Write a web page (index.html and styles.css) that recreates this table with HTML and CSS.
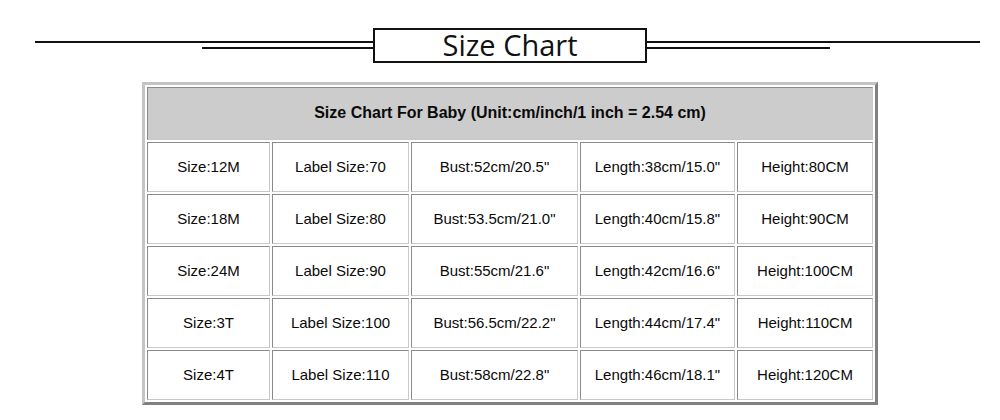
FILE: index.html
```html
<!DOCTYPE html>
<html>
<head>
<meta charset="utf-8">
<link rel="stylesheet" href="styles.css">
</head>
<body>
<div class="page">
  <div class="title-row">
    <div class="rule rule-left">
      <div class="line line-long"></div>
      <div class="line line-short"></div>
    </div>
    <div class="title-box">Size Chart</div>
    <div class="rule rule-right">
      <div class="line line-long"></div>
      <div class="line line-short"></div>
    </div>
  </div>
  <div class="table-wrap">
    <table class="chart">
      <colgroup>
        <col class="c1"><col class="c2"><col class="c3"><col class="c4"><col class="c5">
      </colgroup>
      <tr class="head"><th colspan="5">Size Chart For Baby (Unit:cm/inch/1 inch = 2.54 cm)</th></tr>
      <tr><td>Size:12M</td><td>Label Size:70</td><td>Bust:52cm/20.5"</td><td>Length:38cm/15.0"</td><td>Height:80CM</td></tr>
      <tr><td>Size:18M</td><td>Label Size:80</td><td>Bust:53.5cm/21.0"</td><td>Length:40cm/15.8"</td><td>Height:90CM</td></tr>
      <tr><td>Size:24M</td><td>Label Size:90</td><td>Bust:55cm/21.6"</td><td>Length:42cm/16.6"</td><td>Height:100CM</td></tr>
      <tr><td>Size:3T</td><td>Label Size:100</td><td>Bust:56.5cm/22.2"</td><td>Length:44cm/17.4"</td><td>Height:110CM</td></tr>
      <tr><td>Size:4T</td><td>Label Size:110</td><td>Bust:58cm/22.8"</td><td>Length:46cm/18.1"</td><td>Height:120CM</td></tr>
    </table>
  </div>
</div>
</body>
</html>
```
FILE: styles.css
```css
html, body {
  margin: 0;
  padding: 0;
  background: #ffffff;
}
.page {
  width: 1000px;
  height: 420px;
  overflow: hidden;
}
.title-row {
  display: flex;
  align-items: flex-start;
  padding: 28px 0 0 35px;
}
.rule {
  display: flex;
  flex-direction: column;
  padding-top: 13px;
}
.rule-left {
  width: 338px;
  align-items: flex-end;
}
.rule-right {
  width: 333px;
  align-items: flex-start;
}
.line {
  height: 2px;
  background: #111;
}
.line-long {
  width: 100%;
}
.line-short {
  margin-top: 4px;
}
.rule-left .line-short { width: 171px; }
.rule-right .line-short { width: 183px; }
.title-box {
  box-sizing: border-box;
  width: 274px;
  height: 35px;
  border: 2px solid #111;
  font-family: "Open Sans", "Noto Sans", sans-serif;
  font-size: 29px;
  line-height: 29px;
  color: #111;
  text-align: center;
}
.table-wrap {
  padding: 19px 0 0 142px;
}
.chart {
  width: 736px;
  border-collapse: separate;
  border-spacing: 2px;
  border-style: solid;
  border-width: 3px;
  border-color: #c4c4c4 #808080 #808080 #c4c4c4;
  table-layout: fixed;
  font-family: "Liberation Sans", Arial, sans-serif;
  font-size: 15px;
  color: #0a0a0a;
}
.c1 { width: 123px; }
.c2 { width: 137px; }
.c3 { width: 167px; }
.c4 { width: 155px; }
.c5 { width: 136px; }
.chart th, .chart td {
  box-sizing: border-box;
  padding: 0 0 1px;
  text-align: center;
  border-style: solid;
  border-width: 1px;
  border-color: #8a8a8a #c8c8c8 #c8c8c8 #8a8a8a;
}
.chart th {
  height: 53px;
  background: #cccccc;
  font-weight: bold;
  font-size: 16px;
}
.chart td {
  height: 50px;
  background: #ffffff;
}
```
